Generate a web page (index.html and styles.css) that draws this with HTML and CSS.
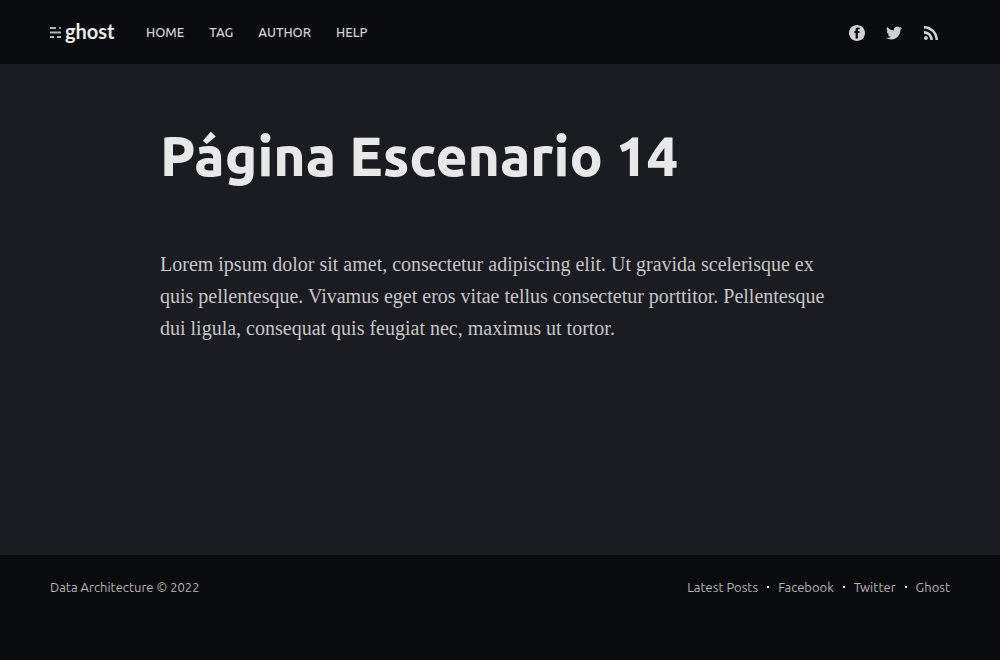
FILE: index.html
```html
<!DOCTYPE html>
<html lang="es">
<head>
<meta charset="utf-8">
<meta name="viewport" content="width=device-width, initial-scale=1">
<title>Página Escenario 14</title>
<link rel="stylesheet" href="styles.css">
</head>
<body>
<header class="site-header">
  <a class="logo" href="#">
    <svg class="logo-mark" viewBox="0 -1 11 12" aria-hidden="true">
      <path fill="#b4b5b6" d="M0 0h6v2H0zM0 4.500h11v2H0zM0 9h4v2H0zM7 9h4v2H7z"/>
      <path fill="#8f9091" d="M9 0h2v2H9z"/>
    </svg>
    <span class="logo-name">ghost</span>
  </a>
  <nav class="nav" aria-label="Main">
    <a href="#">HOME</a>
    <a href="#">TAG</a>
    <a href="#">AUTHOR</a>
    <a href="#">HELP</a>
  </nav>
  <div class="social">
    <a href="#" aria-label="Facebook"><svg class="icon" viewBox="0 0 32 32"><path d="M16 0c8.837 0 16 7.163 16 16s-7.163 16-16 16S0 24.837 0 16 7.163 0 16 0zm5.204 4.911h-3.546c-2.103 0-4.443.885-4.443 3.934.01 1.062 0 2.08 0 3.225h-2.433v3.872h2.509v11.147h4.61v-11.22h3.042l.275-3.81h-3.397s.007-1.695 0-2.187c0-1.205 1.253-1.136 1.329-1.136.596 0 1.756.002 2.054 0V4.911z"/></svg></a>
    <a href="#" aria-label="Twitter"><svg class="icon" viewBox="0 0 24 24"><path d="M23.954 4.569a10 10 0 0 1-2.825.775 4.958 4.958 0 0 0 2.163-2.723c-.951.555-2.005.959-3.127 1.184a4.92 4.92 0 0 0-8.384 4.482C7.691 8.094 4.066 6.13 1.64 3.161a4.822 4.822 0 0 0-.666 2.475c0 1.71.87 3.213 2.188 4.096a4.904 4.904 0 0 1-2.228-.616v.061a4.923 4.923 0 0 0 3.946 4.827 4.996 4.996 0 0 1-2.212.085 4.937 4.937 0 0 0 4.604 3.417 9.868 9.868 0 0 1-6.102 2.105c-.39 0-.779-.023-1.17-.067a13.995 13.995 0 0 0 7.557 2.209c9.054 0 13.999-7.496 13.999-13.986 0-.209 0-.42-.015-.63a9.936 9.936 0 0 0 2.46-2.548z"/></svg></a>
    <a href="#" aria-label="RSS"><svg class="icon icon-rss" viewBox="4 4.44 15.56 15.56"><circle cx="6.18" cy="17.82" r="2.18"/><path d="M4 4.44v2.83c7.03 0 12.73 5.7 12.73 12.73h2.83c0-8.59-6.97-15.56-15.56-15.56zm0 5.66v2.83c3.9 0 7.07 3.17 7.07 7.07h2.83c0-5.47-4.43-9.9-9.9-9.9z"/></svg></a>
  </div>
</header>
<main class="content">
  <article class="page">
    <h1 class="title">Página Escenario 14</h1>
    <p class="text">Lorem ipsum dolor sit amet, consectetur adipiscing elit. Ut gravida scelerisque ex quis pellentesque. Vivamus eget eros vitae tellus consectetur porttitor. Pellentesque dui ligula, consequat quis feugiat nec, maximus ut tortor.</p>
  </article>
</main>
<footer class="site-footer">
  <div><a href="#">Data Architecture</a> © 2022</div>
  <nav class="footer-nav" aria-label="Footer">
    <a href="#">Latest Posts</a>
    <a href="#">Facebook</a>
    <a href="#">Twitter</a>
    <a href="#">Ghost</a>
  </nav>
</footer>
</body>
</html>
```
FILE: styles.css
```css
* {
  box-sizing: border-box;
}

body {
  display: flex;
  flex-direction: column;
  min-height: 100vh;
  margin: 0;
  background: #1b1c21;
  color: #c6c6c7;
  font-family: Ubuntu, "Noto Sans", "Open Sans", sans-serif;
}

a {
  color: inherit;
  text-decoration: none;
}

.site-header {
  display: flex;
  align-items: center;
  height: 64px;
  padding: 0 50px;
  background: #0a0b0c;
}

.logo {
  display: flex;
  align-items: center;
  gap: 4px;
  width: 64px;
  margin-right: 32px;
}

.logo-mark {
  flex: none;
  width: 11px;
  height: 12px;
}

.logo-name {
  padding-bottom: 2px;
  color: #ececec;
  font-family: Lato, "Open Sans", sans-serif;
  font-size: 20px;
  font-weight: 700;
  line-height: 24px;
}

.nav {
  display: flex;
  gap: 25px;
  color: #d3d3d3;
  font-size: 13px;
  font-weight: 500;
  line-height: 20px;
}

.social {
  display: flex;
  align-items: center;
  gap: 21px;
  margin-left: auto;
  padding: 2px 12px 0 0;
}

.icon {
  display: block;
  width: 16px;
  height: 16px;
  fill: #d0d0d0;
}

.icon-rss {
  width: 14px;
  height: 14px;
  margin-left: 1px;
}

.content {
  flex: 1;
  padding: 60px 50px;
}

.page {
  max-width: 680px;
  margin: 0 auto;
}

.title {
  margin: 0 0 60px;
  color: #e8e8e8;
  font-size: 55px;
  font-weight: 800;
  line-height: 64px;
}

.text {
  margin: 0;
  color: #c6c6c7;
  font-family: "Liberation Serif", Georgia, serif;
  font-size: 20px;
  line-height: 32px;
}

.site-footer {
  display: flex;
  justify-content: space-between;
  padding: 22px 50px 63px;
  background: #0a0b0c;
  color: #b5b6b6;
  font-size: 13px;
  line-height: 20px;
}

.footer-nav {
  display: flex;
}

.footer-nav a {
  display: flex;
  align-items: center;
}

.footer-nav a + a::before {
  width: 2px;
  height: 2px;
  margin: 0 9px;
  background: #e4e4e4;
  content: "";
}
```
